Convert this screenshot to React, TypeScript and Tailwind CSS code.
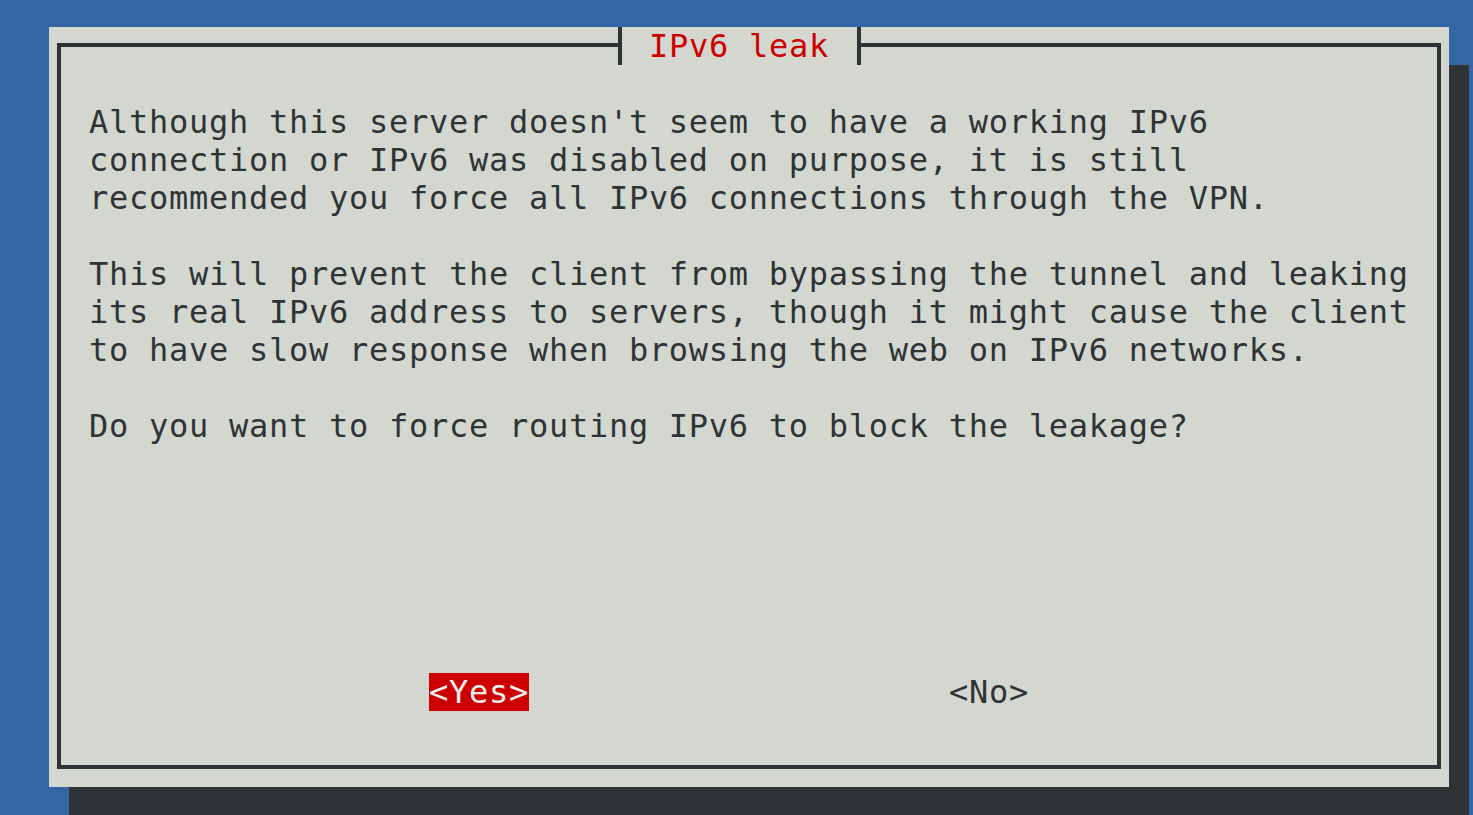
const para1 = [
  "Although this server doesn't seem to have a working IPv6",
  'connection or IPv6 was disabled on purpose, it is still',
  'recommended you force all IPv6 connections through the VPN.',
];

const para2 = [
  'This will prevent the client from bypassing the tunnel and leaking',
  'its real IPv6 address to servers, though it might cause the client',
  'to have slow response when browsing the web on IPv6 networks.',
];

const question = 'Do you want to force routing IPv6 to block the leakage?';

const mono = "font-['DejaVu_Sans_Mono',monospace] text-[32px] leading-[38px] tracking-[0.73px] whitespace-pre";

const App = () => {
  return (
    <div className="w-[1473px] h-[815px] overflow-hidden bg-[#3465a4] pl-[49px] pt-[27px]">
      {/* Dialog window with terminal-style drop shadow */}
      <div className={`relative w-[1400px] h-[760px] bg-[#d3d7cf] shadow-[20px_38px_0_0_#2e3436] pt-[16px] px-[8px] pb-[18px] text-[#2e3436] ${mono}`}>
        <div className="h-full border-4 border-[#2e3436] flex flex-col pl-[28px] pt-[56px] pb-[54px]">
          <div>
            {para1.map((line, i) => (
              <div key={i} className="h-[38px]">{line}</div>
            ))}
          </div>
          <div className="mt-[38px]">
            {para2.map((line, i) => (
              <div key={i} className="h-[38px]">{line}</div>
            ))}
          </div>
          <div className="mt-[38px] h-[38px]">{question}</div>

          {/* Buttons */}
          <div className="mt-auto flex h-[38px]">
            <span className="ml-[340px] bg-[#cc0000] text-[#eeeeec]">{'<Yes>'}</span>
            <span className="ml-[420px]">{'<No>'}</span>
          </div>
        </div>

        {/* Title sits over the top border line */}
        <div className="absolute top-0 left-[569px] w-[243px] h-[38px] border-x-4 border-[#2e3436] bg-[#d3d7cf] pl-[27px] text-[#cc0000]">
          IPv6 leak
        </div>
      </div>
    </div>
  );
};

export default App;
